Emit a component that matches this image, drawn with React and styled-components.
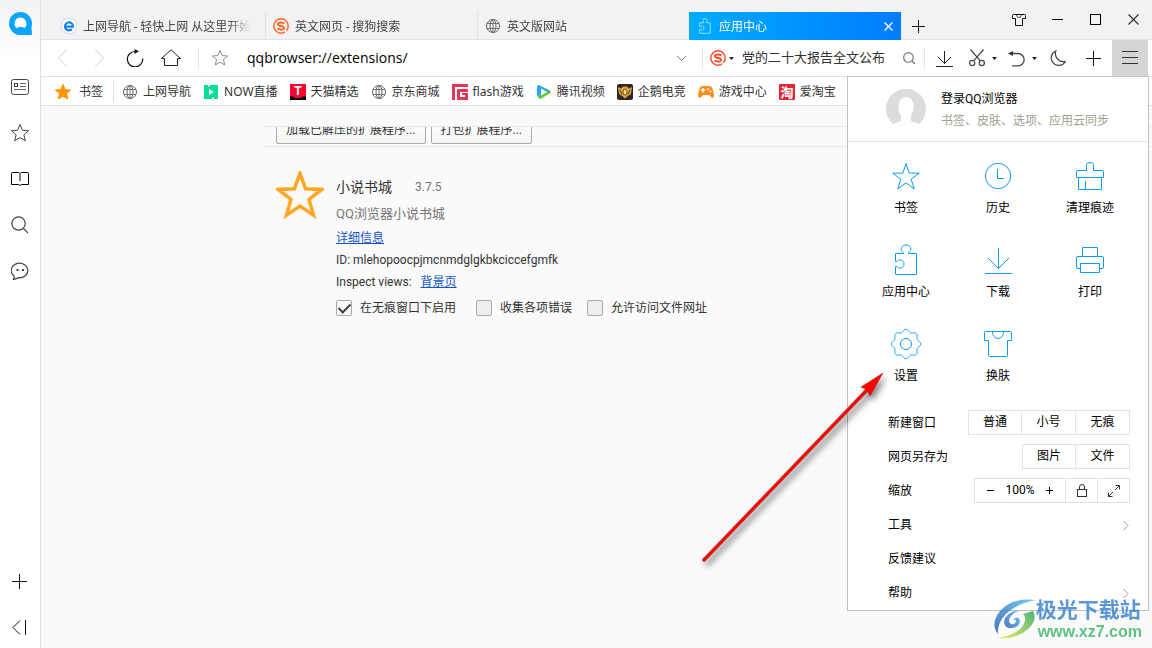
import React from 'react';
import styled, { createGlobalStyle, css } from 'styled-components';

const GlobalStyle = createGlobalStyle`
    * {
        box-sizing: border-box;
    }

    body {
        margin: 0;
        background: #fafafa;
        color: #333;
        font-family: Roboto, "Noto Sans CJK SC", sans-serif;
        font-size: 12px;
    }

    button, input {
        margin: 0;
        padding: 0;
        border: 0;
        background: none;
        color: inherit;
        font: inherit;
    }

    svg {
        display: block;
        flex: none;
    }
`;

/* ---------- icons ---------- */

const starPoints = (cx, cy, outer, inner) => Array.from({ length: 10 }, (_, i) => {
    const r = i % 2 ? inner : outer;
    const a = (Math.PI / 5) * i - Math.PI / 2;
    return `${(cx + r * Math.cos(a)).toFixed(2)},${(cy + r * Math.sin(a)).toFixed(2)}`;
}).join(' ');

const gearPoints = Array.from({ length: 160 }, (_, i) => {
    const a = (Math.PI / 80) * i;
    const r = 13.4 + 1.3 * Math.cos(8 * a);
    return `${(16 + r * Math.cos(a)).toFixed(2)},${(16 + r * Math.sin(a)).toFixed(2)}`;
}).join(' ');

const Icon = ({ size = 16, h, color = 'currentColor', children }) => (
    <svg width={size} height={h || size} viewBox={`0 0 ${size} ${h || size}`} fill="none" stroke={color} aria-hidden="true">
        {children}
    </svg>
);

const QQLogo = () => (
    <Icon size={24}>
        <g transform="translate(1 0)" stroke="none">
            <path d="M11.500 0A11.500 11.500 0 0 1 22.500 15L23 22Q23 23 22 23H11.500A11.500 11.500 0 0 1 11.500 0Z" fill="#0aa5ff" />
            <path d="M11.500 5.500A6 6 0 0 0 8 16.300Q10 14.400 12.500 14.900Q15.500 15.500 15.700 16A6.200 6.200 0 0 0 11.500 5.500Z" fill="#fff" />
        </g>
    </Icon>
);

const NewsIcon = () => (
    <Icon size={18}>
        <rect x="0.5" y="1.5" width="17" height="15" rx="2" />
        <rect x="3.5" y="5.500" width="3" height="3" />
        <path d="M9 5.500H15M9 8.500H15M3 11.500H15" strokeWidth="0.8" />
    </Icon>
);

const StarIcon = ({ size = 18, fill = 'none', color }) => (
    <Icon size={size} color={color}>
        <polygon points={starPoints(size / 2, size / 2 + 0.5, size / 2, size / 4.4)} fill={fill} strokeLinejoin="round" />
    </Icon>
);

const BookIcon = () => (
    <Icon size={18} color="#000">
        <path d="M9 3.500L8 2.500H1.500Q0.500 2.500 0.500 3.500V14.500H7.500L9 15.500L10.500 14.500H17.500V3.500Q17.500 2.500 16.500 2.500H10ZM9 3.500V11" />
    </Icon>
);

const SearchIcon = ({ size = 18 }) => (
    <Icon size={size}>
        <circle cx={size * 0.42} cy={size * 0.42} r={size * 0.37} strokeWidth="1.200" />
        <path d={`M${size * 0.69} ${size * 0.69}L${size - 1} ${size - 1}`} strokeWidth="1.200" />
    </Icon>
);

const ChatIcon = () => (
    <Icon size={18}>
        <path d="M3 14A8.300 7.300 0 1 1 7 15.700Q5 17.300 2.500 17.300Q3.500 15.800 3 14Z" strokeWidth="1.200" />
        <path d="M5.500 8H7.500M11 8H13" strokeWidth="2" />
    </Icon>
);

const PlusIcon = ({ size = 15 }) => (
    <Icon size={size} color="#111">
        <path d={`M0 ${size / 2}H${size}M${size / 2} 0V${size}`} />
    </Icon>
);

const CollapseIcon = () => (
    <Icon size={15} color="#111"><path d="M8 0.500L1 7.500L8 14.500M13.500 0V15" /></Icon>
);

const GlobeIcon = () => (
    <Icon color="#666">
        <circle cx="8" cy="8" r="6.500" />
        <ellipse cx="8" cy="8" rx="3" ry="6.500" />
        <path d="M8 1.500V14.500M2 5.500H14M2 10.500H14" strokeWidth="0.9" />
    </Icon>
);

const Letter = styled.text`
    fill: ${({ $color }) => $color || '#fff'};
    stroke: none;
    font: bold ${({ $size }) => $size || 12}px "Liberation Sans", "Noto Sans CJK SC", sans-serif;
    text-anchor: middle;
`;

const EdgeIcon = () => (
    <Icon size={16}>
        <rect x="0.500" y="0.500" width="15" height="15" rx="6" fill="#fff" stroke="#cfd6de" />
        <path d="M4 8.600H12A4 4 0 1 0 11 11" stroke="#1583f0" strokeWidth="2.200" />
    </Icon>
);

const SogouIcon = ({ color = '#fd6a2b' }) => (
    <Icon size={16}>
        <circle cx="8" cy="8" r="7.200" stroke={color} strokeWidth="1.500" />
        <path d="M11.500 5.200Q8 4 5.500 4.900Q4 6.500 6 7.500L10 8.500Q12 10 10.200 11.200Q7.500 12 4.500 10.700" stroke={color} strokeWidth="2" />
        <path d="M12 12.500L14 15" stroke="#fff" strokeWidth="1.500" />
    </Icon>
);

const puzzleBody = 'M5.500 9.500H13.500V8.500C10.800 7 10.600 4.500 12 2.800C14 0.300 18 0.300 20 2.800C21.400 4.500 21.200 7 18.500 8.500V9.500H26Q26.500 9.500 26.500 10V30Q26.500 30.500 26 30.500H6Q5.500 30.500 5.500 30V22.500H7C8.500 25.300 14 24.500 14 20C14 15.500 8.500 14.700 7 17.500H5.500Z';

const PuzzleSmall = () => (
    <svg width="16" height="16" viewBox="4 0 24 32" fill="none" stroke="#8fe0ff" strokeWidth="2" aria-hidden="true">
        <path d={puzzleBody} />
    </svg>
);

const ShirtSmall = () => (
    <Icon size={14} color="#111">
        <path d="M4 1.500H1.500Q0.500 1.500 0.500 2.500V5.500H3.500V12.500H10.500V5.500H13.500V2.500Q13.500 1.500 12.500 1.500H10Z" />
        <path d="M4.500 2Q5 4.500 7 4.500Q9 4.500 9.500 2" strokeWidth="0.7" />
    </Icon>
);

const MinIcon = () => <Icon size={11} color="#000"><path d="M0 5.500H11" /></Icon>;
const MaxIcon = () => <Icon size={11} color="#000"><rect x="0.500" y="0.500" width="10" height="10" /></Icon>;
const CloseIcon = ({ size = 11 }) => (
    <Icon size={size}><path d={`M0.500 0.500L${size - 0.5} ${size - 0.5}M${size - 0.5} 0.500L0.500 ${size - 0.5}`} strokeWidth="1.200" /></Icon>
);

const BackIcon = () => <Icon size={18} color="#ccc"><path d="M13 0.500L4.500 9L13 17.500" /></Icon>;
const ForwardIcon = () => <Icon size={18} color="#ccc"><path d="M5 0.500L13.500 9L5 17.500" /></Icon>;

const ReloadIcon = () => (
    <Icon size={18} color="#111">
        <path d="M10.500 2.500H8.800A7.700 7.700 0 1 0 16.700 9.500" strokeWidth="1.200" />
        <path d="M8.500 0L13 2.300L8.500 5Z" fill="#111" stroke="none" />
    </Icon>
);

const HomeIcon = () => (
    <Icon size={20} h={18} color="#222"><path d="M0.500 9.500L10 0.800L19.500 9.500H16.500V16.500H3.500V9.500Z" /></Icon>
);

const DownIcon = () => <Icon size={11} h={7} color="#888"><path d="M1 1L5.500 5.500L10 1" /></Icon>;
const Caret = () => (
    <Icon size={5} h={3}><path d="M0 0H5L2.500 3Z" fill="#222" stroke="none" /></Icon>
);

const DownloadIcon = () => (
    <Icon size={17} color="#222"><path d="M8.500 1V13.500M2 7L8.500 13.500L15 7M0 16.500H17" /></Icon>
);

const ScissorsIcon = () => (
    <Icon size={16} h={18} color="#444">
        <circle cx="3.200" cy="14" r="2.600" strokeWidth="1.200" />
        <circle cx="12.800" cy="14" r="2.600" strokeWidth="1.200" />
        <path d="M1.500 0.500L11.300 11.800M14.500 0.500L4.700 11.800" strokeWidth="1.200" />
    </Icon>
);

const UndoIcon = () => (
    <Icon size={17} color="#444">
        <path d="M2 3.500H10A6 6 0 0 1 10 15.800H4" strokeWidth="1.300" />
        <path d="M0 3.500L5 1V6Z" fill="#333" stroke="none" />
    </Icon>
);

const MoonIcon = () => (
    <Icon size={16} color="#444"><path d="M5.800 1A7.500 7.500 0 1 0 15.300 11.500A8.200 8.200 0 0 1 5.800 1Z" strokeWidth="1.200" /></Icon>
);

const MenuIcon = () => (
    <Icon size={16} h={14} color="#333"><path d="M0 0.500H16M0 6.500H16M0 12.500H16" /></Icon>
);

const NowIcon = () => (
    <Icon>
        <path d="M1 1H5V3L8 1H15V15H11V13L8 15H1Z" fill="#06dd96" stroke="none" />
        <path d="M6 5L11 8L6 11Z" fill="#fff" stroke="none" />
    </Icon>
);

const TmallIcon = () => (
    <Icon>
        <rect width="16" height="16" fill="#ff0030" stroke="none" />
        <path d="M0 12.500H3L5 14H11L13 12.500H16V16H0Z" fill="#000" stroke="none" />
        <Letter x="8" y="10.500" $size={12}>T</Letter>
    </Icon>
);

const FlashIcon = () => (
    <Icon>
        <path d="M0 0H16V3H3V16H0Z" fill="#e8355a" stroke="none" />
        <path d="M5 5H16V8H8V13H13V11H10V9H16V16H5Z" fill="#e8355a" stroke="none" />
    </Icon>
);

const VideoIcon = () => (
    <Icon>
        <path d="M1 3Q1 0 4 1.500L8 4L3 14Q0 13 1 3Z" fill="#24a9f2" stroke="none" />
        <path d="M3 1L14 6.500Q16 8 14 9.500L9 11Z" fill="#ff9d1e" stroke="none" />
        <path d="M2 4Q2 1 5 2.300L13 6.500Q15 8 13 9.500L9 8Z" fill="#24a9f2" stroke="none" />
        <path d="M2 12L11 7L14 9.200L5 14.800Q2.500 16 2 12Z" fill="#62cf3c" stroke="none" />
        <path d="M5 4.500L11 8L5 11.500Z" fill="#fff" stroke="none" />
    </Icon>
);

const EgameIcon = () => (
    <Icon>
        <rect width="16" height="16" rx="2" fill="#2b2824" stroke="none" />
        <path d="M1 3L4 4.500L6 2.500H10L12 4.500L15 3L14 10L11 12L8 14.500L5 12L2 10Z" fill="#d7a540" stroke="none" />
        <ellipse cx="8" cy="8" rx="2" ry="3" fill="#fbe08b" stroke="#7b5518" />
        <path d="M3 6L5 10.500M13 6L11 10.500" stroke="#5c421b" />
    </Icon>
);

const GamepadIcon = () => (
    <Icon>
        <path d="M4 2H12Q15 2.500 16 12Q15.500 14.500 13.500 13.500L11 11H5L2.500 13.500Q0.500 14.500 0 12Q1 2.500 4 2Z" fill="#ff8b1a" stroke="none" />
        <path d="M5 4V8.500M2.800 6.300H7.300" stroke="#fff" strokeWidth="1.500" />
        <circle cx="10" cy="5" r="1" fill="#fff" stroke="none" />
        <circle cx="12.500" cy="7.500" r="1" fill="#fff" stroke="none" />
    </Icon>
);

const TaoIcon = () => (
    <Icon>
        <rect width="16" height="16" rx="1" fill="#e02535" stroke="none" />
        <Letter x="8" y="13" $size={13}>淘</Letter>
    </Icon>
);

// the head and shoulders are left out of the grey disc
const AvatarIcon = () => (
    <Icon size={40}>
        <path d="M7 35A20 20 0 1 1 33 35L25 32V27Q27.500 23 27.500 18Q27.500 8 20 8Q12.500 8 12.500 18Q12.500 23 15 27V32Z" fill="#dcdcdc" stroke="none" />
    </Icon>
);

const BLUE = '#0c9df2';
const tileIcons = {
    star: <polygon points={starPoints(16, 17.5, 14, 5.4)} />,
    clock: <><circle cx="16" cy="16" r="12.700" /><path d="M15.500 9V18.500H22" /></>,
    brush: (
        <path d="M12.500 10.500V4.500Q12.500 2.500 16 2.500Q19.500 2.500 19.500 4.500V10.500H28Q29.500 10.500 29.500 12V17.500H2.500V12Q2.500 10.500 4 10.500ZM4.500 17.500V29.500H27.500V17.500M11.500 21V29.500" />
    ),
    puzzle: <path d={puzzleBody} />,
    download: <path d="M16.500 4V24.500M6 14L16.500 24.500L27 14M3 29.500H30" />,
    print: (
        <path d="M8.500 12.500V3.500H23.500V12.500M6.500 24.500H4Q2.500 24.500 2.500 23V14Q2.500 12.500 4 12.500H28Q29.500 12.500 29.500 14V23Q29.500 24.500 28 24.500H25.500M6.500 19.500H25.500V28.500H6.500Z" />
    ),
    gear: <><polygon points={gearPoints} /><circle cx="16" cy="16" r="5.500" /></>,
    shirt: <path d="M3.500 3.500H28.500Q29.500 3.500 29.500 4.500V12.500H25.500V27.500Q25.500 28.500 24.500 28.500H7.500Q6.500 28.500 6.500 27.500V12.500H2.500V4.500Q2.500 3.500 3.500 3.500ZM10.500 4C10.500 12.500 21.500 12.500 21.500 4" />,
};

const LockIcon = () => (
    <Icon size={10} h={13} color="#333">
        <rect x="0.500" y="5.500" width="9" height="7" />
        <path d="M2.500 5.500V3A2.500 2.500 0 0 1 7.500 3V5.500" />
    </Icon>
);

const ExpandIcon = () => (
    <Icon size={12} color="#333"><path d="M7.500 0.500H11.500V4.500M11.500 0.500L7 5M4.500 11.500H0.500V7.500M0.500 11.500L5 7" /></Icon>
);

const ChevronIcon = () => <Icon size={6} h={11} color="#999"><path d="M0.500 1L5 5.500L0.500 10" /></Icon>;

/* ---------- frame ---------- */

const Window = styled.div`
    position: relative;
    display: flex;
    min-height: 100vh;
`;

const Sidebar = styled.nav`
    display: flex;
    flex-direction: column;
    align-items: center;
    gap: 6px;
    flex: none;
    width: 41px;
    padding: 12px 1px 1px 0;
    border-right: 1px solid #e0e0e0;
    background: linear-gradient(#f2f2f4, #fff 60px);
    color: #444;
`;

const SideLogo = styled.div`
    height: 49px;
`;

const SideButton = styled.button`
    display: grid;
    place-items: center;
    width: 38px;
    height: 40px;
`;

const SideSpacer = styled.div`
    flex: 1;
`;

const Main = styled.div`
    display: flex;
    flex: 1;
    flex-direction: column;
    min-width: 0;
`;

/* ---------- tab strip ---------- */

const TabStrip = styled.header`
    display: flex;
    height: 40px;
    padding-left: 12px;
    border-bottom: 1px solid #e2e2e4;
    background: #f2f2f4;
`;

const Tab = styled.div`
    display: flex;
    align-items: center;
    gap: 6px;
    flex: 0 1 212px;
    min-width: 0;
    height: 28px;
    margin-top: 12px;
    padding: 0 8px;
    color: #444;

    & + & {
        box-shadow: inset 1px 0 #e2e2e4;
    }

    ${({ $active }) => $active && css`
        && {
            box-shadow: none;
        }
        background: linear-gradient(90deg, #00acff, #007bff);
        color: #fff;
    `}
`;

const TabTitle = styled.span`
    flex: 1;
    overflow: hidden;
    padding-top: 2px;
    line-height: 20px;
    white-space: nowrap;
    mask-image: linear-gradient(90deg, #000 145px, transparent 168px);
`;

const NewTab = styled.button`
    display: grid;
    place-items: center;
    width: 35px;
    height: 28px;
    margin-top: 12px;
`;

const WindowControls = styled.div`
    display: flex;
    margin-left: auto;
`;

const ControlButton = styled.button`
    display: grid;
    place-items: center;
    width: 38px;
    height: 39px;
`;

/* ---------- toolbar ---------- */

const Toolbar = styled.div`
    display: flex;
    align-items: center;
    height: 37px;
    padding: 0 4px;
    border-bottom: 1px solid #e2e2e4;
    background: #fff;
`;

const ToolButton = styled.button`
    display: flex;
    align-items: center;
    justify-content: center;
    gap: 7px;
    flex: none;
    width: ${({ $w }) => $w || 36}px;
    height: 36px;
    color: #777;
    background: ${({ $open }) => ($open ? '#d5d5d5' : 'none')};
`;

const Divider = styled.div`
    flex: none;
    width: 1px;
    height: 22px;
    margin-left: ${({ $gap }) => $gap || 0}px;
    background: #e2e2e4;
`;

const AddressInput = styled.input`
    flex: 1;
    min-width: 0;
    padding-left: 6px;
    color: #000;
    font-family: "Open Sans", sans-serif;
    font-size: 14px;
    line-height: 24px;
    outline: none;
`;

const EngineButton = styled.button`
    display: flex;
    align-items: center;
    gap: 3px;
    padding: 0 8px 0 7px;
`;

const SearchInput = styled.input`
    width: 152px;
    color: #333;
    font-size: 13px;
    line-height: 20px;
    outline: none;
`;

/* ---------- bookmarks ---------- */

const BookmarkBar = styled.nav`
    display: flex;
    align-items: center;
    gap: 12px;
    height: 29px;
    padding-left: 14px;
    border-bottom: 1px solid #e2e2e4;
    background: #fff;
    font-family: "Noto Sans", "Noto Sans CJK SC", sans-serif;
    overflow: hidden;
`;

const Bookmark = styled.a`
    display: flex;
    align-items: center;
    gap: 5px;
    padding-top: 2px;
    color: #333;
    line-height: 20px;
    text-decoration: none;
    white-space: nowrap;
`;

const Favorites = styled.div`
    display: flex;
    align-items: center;
    gap: 10px;
    margin-right: -4px;
`;

const FavoritesButton = styled.button`
    display: flex;
    align-items: center;
    gap: 8px;
    padding-top: 2px;
    line-height: 20px;
`;

/* ---------- extension page ---------- */

const Page = styled.main`
    flex: 1;
    padding: 20px 0 0 223px;
    background: #fafafa;
`;

const DevTools = styled.div`
    display: flex;
    align-items: flex-end;
    gap: 5px;
    height: 21px;
    padding: 0 12px 2px;
    border-top: 1px solid #e8e8e8;
    border-bottom: 1px solid #e8e8e8;
    overflow: hidden;
`;

const DevButton = styled.button`
    height: 26px;
    padding: 0 9px 2px;
    border: 1px solid #aaa;
    border-radius: 2px;
    background: linear-gradient(#fff, #f4f4f4);
    line-height: 22px;
    white-space: nowrap;
`;

const Extension = styled.article`
    display: flex;
    gap: 12px;
    padding: 24px 12px;
    line-height: 22px;
`;

const Details = styled.div`
    padding-top: 5px;
    color: #333;
`;

const TitleRow = styled.div`
    display: flex;
    gap: 23px;
    margin-bottom: 5px;
`;

const Title = styled.h1`
    margin: 0;
    font-size: 14px;
    font-weight: normal;
`;

const Version = styled.span`
    color: #777;
`;

const Description = styled.p`
    margin: 0 0 2px;
    color: #777;
    font-size: 13px;
`;

const Line = styled.div`
    display: flex;
    gap: 9px;
`;

const PageLink = styled.a`
    color: #15c;
`;

const Options = styled.div`
    display: flex;
    gap: 15px;
    margin-top: 4px;
`;

const Option = styled.label`
    display: flex;
    align-items: center;
    gap: 8px;
    padding-right: ${({ $spaced }) => ($spaced ? 5 : 0)}px;
    white-space: nowrap;
`;

const Checkbox = styled.input.attrs({ type: 'checkbox' })`
    appearance: none;
    display: grid;
    place-items: center;
    width: 16px;
    height: 16px;
    border: 1px solid #aaa;
    border-radius: 2px;
    background: #eee;

    &:checked {
        background: #fafafa;
    }

    &:checked::after {
        content: "";
        width: 5px;
        height: 10px;
        border: solid #444;
        border-width: 0 2px 2px 0;
        transform: translateY(-1px) rotate(45deg);
    }
`;

/* ---------- main menu ---------- */

const MenuPanel = styled.aside`
    position: absolute;
    top: 76px;
    right: 3px;
    width: 302px;
    border: 1px solid #c0c0c0;
    background: #fff;
    color: #000;
`;

const Account = styled.div`
    display: flex;
    gap: 15px;
    height: 65px;
    padding: 12px 0 0 38px;
    border-bottom: 1px solid #e5e5e5;
    line-height: 22px;
`;

const AccountText = styled.div`
    margin-top: -1px;
`;

const AccountHint = styled.div`
    color: #a0a090;
`;

const Tiles = styled.div`
    display: grid;
    grid-template-columns: repeat(3, 92px);
    grid-auto-rows: 84px;
    padding: 12px 0 0 12px;
`;

const Tile = styled.button`
    display: flex;
    flex-direction: column;
    align-items: center;
    gap: 6px;
    padding-top: 6px;
    line-height: 20px;
`;

const MenuRow = styled.div`
    display: flex;
    align-items: center;
    justify-content: space-between;
    height: 34px;
    padding: 0 18px 0 40px;
    line-height: 20px;
`;

const MenuLink = styled(MenuRow).attrs({ as: 'button' })`
    width: 100%;
    padding-right: 19px;
`;

const Segments = styled.div`
    display: flex;
    height: 25px;
    margin-bottom: 1px;
`;

const Segment = styled.button`
    display: grid;
    place-items: center;
    width: ${({ $w }) => $w || 54}px;
    border: 1px solid #e2e2e2;
    line-height: 21px;

    & + &, div + & {
        border-left: 0;
    }
`;

const Zoom = styled.div`
    display: flex;
    align-items: center;
    width: 92px;
    border: 1px solid #e2e2e2;
    line-height: 21px;
`;

const ZoomStep = styled.button`
    display: grid;
    flex: 1;
    place-items: center;
    height: 23px;
`;

/* ---------- overlays ---------- */

const Pointer = styled.svg`
    position: absolute;
    top: 364px;
    right: 256px;
    pointer-events: none;
    filter: drop-shadow(3px 4px 3px rgba(0, 0, 0, 0.5));
`;

const SiteMark = styled.div`
    position: absolute;
    right: 10px;
    bottom: 7px;
    display: flex;
    align-items: center;
    opacity: 0.85;
`;

const SiteText = styled.div`
    color: #3f86cf;
    font-size: 21px;
    font-weight: bold;
    line-height: 26px;
`;

const SiteUrl = styled.div`
    padding-left: 2px;
    color: #45b86e;
    font: bold 16px/18px "Liberation Sans", sans-serif;
`;

const bookmarks = [
    ['上网导航', <GlobeIcon />],
    ['NOW直播', <NowIcon />],
    ['天猫精选', <TmallIcon />],
    ['京东商城', <GlobeIcon />],
    ['flash游戏', <FlashIcon />],
    ['腾讯视频', <VideoIcon />],
    ['企鹅电竞', <EgameIcon />],
    ['游戏中心', <GamepadIcon />],
    ['爱淘宝', <TaoIcon />],
];

const tiles = [
    ['书签', 'star'],
    ['历史', 'clock'],
    ['清理痕迹', 'brush'],
    ['应用中心', 'puzzle'],
    ['下载', 'download'],
    ['打印', 'print'],
    ['设置', 'gear'],
    ['换肤', 'shirt'],
];

const SideNav = () => (
    <Sidebar>
        <SideLogo><QQLogo /></SideLogo>
        <SideButton aria-label="新闻"><NewsIcon /></SideButton>
        <SideButton aria-label="收藏"><StarIcon size={18} /></SideButton>
        <SideButton aria-label="阅读"><BookIcon /></SideButton>
        <SideButton aria-label="搜索"><SearchIcon /></SideButton>
        <SideButton aria-label="消息"><ChatIcon /></SideButton>
        <SideSpacer />
        <SideButton aria-label="添加"><PlusIcon /></SideButton>
        <SideButton aria-label="收起"><CollapseIcon /></SideButton>
    </Sidebar>
);

const Tabs = () => (
    <TabStrip>
        <Tab><EdgeIcon /><TabTitle>上网导航 - 轻快上网 从这里开始</TabTitle></Tab>
        <Tab><SogouIcon /><TabTitle>英文网页 - 搜狗搜索</TabTitle></Tab>
        <Tab><GlobeIcon /><TabTitle>英文版网站</TabTitle></Tab>
        <Tab $active>
            <PuzzleSmall />
            <TabTitle>应用中心</TabTitle>
            <button aria-label="关闭标签"><CloseIcon size={9} /></button>
        </Tab>
        <NewTab aria-label="新标签"><PlusIcon size={13} /></NewTab>
        <WindowControls>
            <ControlButton aria-label="皮肤"><ShirtSmall /></ControlButton>
            <ControlButton aria-label="最小化"><MinIcon /></ControlButton>
            <ControlButton aria-label="最大化"><MaxIcon /></ControlButton>
            <ControlButton aria-label="关闭"><CloseIcon /></ControlButton>
        </WindowControls>
    </TabStrip>
);

const AddressBar = () => (
    <Toolbar>
        <ToolButton aria-label="后退"><BackIcon /></ToolButton>
        <ToolButton aria-label="前进"><ForwardIcon /></ToolButton>
        <ToolButton aria-label="刷新"><ReloadIcon /></ToolButton>
        <ToolButton aria-label="主页"><HomeIcon /></ToolButton>
        <Divider $gap={9} />
        <ToolButton $w={42} aria-label="加入书签"><StarIcon size={16} color="#888" /></ToolButton>
        <AddressInput aria-label="地址" defaultValue="qqbrowser://extensions/" />
        <ToolButton $w={42} aria-label="展开地址"><DownIcon /></ToolButton>
        <Divider />
        <EngineButton aria-label="搜索引擎"><SogouIcon color="#f4502a" /><Caret /></EngineButton>
        <SearchInput aria-label="搜索" defaultValue="党的二十大报告全文公布" />
        <ToolButton $w={30} aria-label="开始搜索"><SearchIcon size={13} /></ToolButton>
        <Divider />
        <ToolButton $w={38} aria-label="下载"><DownloadIcon /></ToolButton>
        <ToolButton $w={40} aria-label="截图"><ScissorsIcon /><Caret /></ToolButton>
        <ToolButton $w={38} aria-label="撤销"><UndoIcon /><Caret /></ToolButton>
        <ToolButton $w={34} aria-label="夜间模式"><MoonIcon /></ToolButton>
        <ToolButton $w={37} aria-label="添加"><PlusIcon /></ToolButton>
        <ToolButton $open aria-label="菜单"><MenuIcon /></ToolButton>
    </Toolbar>
);

const Bookmarks = () => (
    <BookmarkBar>
        <Favorites>
            <FavoritesButton><StarIcon size={16} fill="#ff9500" color="#ff9500" />书签</FavoritesButton>
            <Divider />
        </Favorites>
        {bookmarks.map(([name, icon]) => (
            <Bookmark key={name} href="#">{icon}{name}</Bookmark>
        ))}
    </BookmarkBar>
);

const ExtensionPage = () => (
    <Page>
        <DevTools>
            <DevButton>加载已解压的扩展程序...</DevButton>
            <DevButton>打包扩展程序...</DevButton>
        </DevTools>
        <Extension>
            <svg width="48" height="48" viewBox="0 0 48 48" aria-hidden="true">
                <polygon points={starPoints(24, 25.5, 23, 9.5)} fill="none" stroke="#ffa51e" strokeWidth="3.500" />
            </svg>
            <Details>
                <TitleRow><Title>小说书城</Title><Version>3.7.5</Version></TitleRow>
                <Description>QQ浏览器小说书城</Description>
                <Line><PageLink href="#">详细信息</PageLink></Line>
                <Line>ID: mlehopoocpjmcnmdglgkbkciccefgmfk</Line>
                <Line>Inspect views: <PageLink href="#">背景页</PageLink></Line>
                <Options>
                    <Option $spaced><Checkbox defaultChecked />在无痕窗口下启用</Option>
                    <Option><Checkbox />收集各项错误</Option>
                    <Option><Checkbox />允许访问文件网址</Option>
                </Options>
            </Details>
        </Extension>
    </Page>
);

const MainMenu = () => (
    <MenuPanel>
        <Account>
            <AvatarIcon />
            <AccountText>
                <div>登录QQ浏览器</div>
                <AccountHint>书签、皮肤、选项、应用云同步</AccountHint>
            </AccountText>
        </Account>
        <Tiles>
            {tiles.map(([name, icon]) => (
                <Tile key={name}><Icon size={32} color={BLUE}>{tileIcons[icon]}</Icon>{name}</Tile>
            ))}
        </Tiles>
        <MenuRow>
            新建窗口
            <Segments><Segment>普通</Segment><Segment>小号</Segment><Segment>无痕</Segment></Segments>
        </MenuRow>
        <MenuRow>
            网页另存为
            <Segments><Segment>图片</Segment><Segment>文件</Segment></Segments>
        </MenuRow>
        <MenuRow>
            缩放
            <Segments>
                <Zoom>
                    <ZoomStep aria-label="缩小"><Icon size={7}><path d="M0 3.500H7" /></Icon></ZoomStep>
                    100%
                    <ZoomStep aria-label="放大"><Icon size={7}><path d="M0 3.500H7M3.500 0V7" /></Icon></ZoomStep>
                </Zoom>
                <Segment $w={32} aria-label="锁定缩放"><LockIcon /></Segment>
                <Segment $w={32} aria-label="全屏"><ExpandIcon /></Segment>
            </Segments>
        </MenuRow>
        <MenuLink>工具<ChevronIcon /></MenuLink>
        <MenuLink>反馈建议</MenuLink>
        <MenuLink>帮助<ChevronIcon /></MenuLink>
    </MenuPanel>
);

const App = () => (
    <>
        <GlobalStyle />
        <Window>
            <SideNav />
            <Main>
                <Tabs />
                <AddressBar />
                <Bookmarks />
                <ExtensionPage />
            </Main>
            <MainMenu />
            <Pointer width="200" height="210" viewBox="0 0 200 210" aria-hidden="true">
                <path d="M8 196L172 25" stroke="#999" strokeWidth="4" strokeLinecap="round" />
                <path d="M8 196L172 25" stroke="#f00" strokeWidth="3" strokeLinecap="round" />
                <path d="M187 9L165 23L171 26L174 32Z" fill="#f00" stroke="#a22" strokeWidth="0.5" />
            </Pointer>
            <SiteMark>
                <svg width="42" height="42" viewBox="0 0 42 42" aria-hidden="true">
                    <defs>
                        <linearGradient id="swirlBlue" x1="0" y1="1" x2="1" y2="0">
                            <stop offset="0" stopColor="#2b62b5" />
                            <stop offset="1" stopColor="#5bc0f0" />
                        </linearGradient>
                        <linearGradient id="swirlGreen" x1="0" y1="1" x2="1" y2="0">
                            <stop offset="0" stopColor="#e8e84a" />
                            <stop offset="1" stopColor="#2ea866" />
                        </linearGradient>
                    </defs>
                    <path d="M42 2Q18 -1 6 13Q-4 26 4 36Q3 26 11 17Q21 6 42 2Z" fill="url(#swirlBlue)" />
                    <path d="M27 12Q12 13 10 24Q11 31 18 30Q26 29 26 22Q24 17 18 22Q21 20 22 23Q21 27 17 26Q13 23 17 18Q20 14 27 12Z" fill="url(#swirlBlue)" />
                    <path d="M39 13Q44 22 34 31Q22 42 4 40Q22 37 28 29Q34 20 29 16Z" fill="url(#swirlGreen)" />
                </svg>
                <div>
                    <SiteText>极光下载站</SiteText>
                    <SiteUrl>www.xz7.com</SiteUrl>
                </div>
            </SiteMark>
        </Window>
    </>
);

export default App;
